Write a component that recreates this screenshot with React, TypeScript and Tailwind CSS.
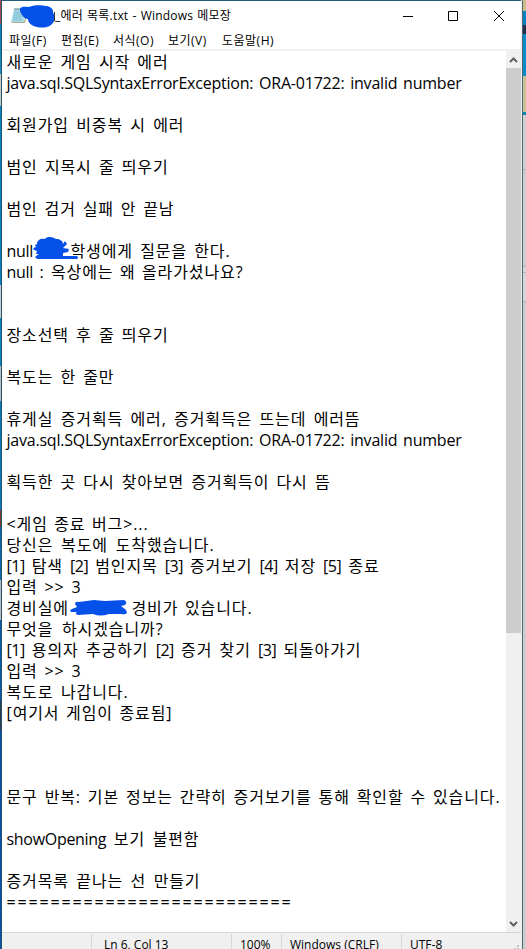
interface Line {
  text?: string;
  size?: string;
}

const hangul = "text-[16px] tracking-[0.9px]";
const latin = "text-[16px] tracking-[-0.22px]";

const lines: Line[] = [
  { text: "새로운 게임 시작 에러", size: "w-[162px]" },
  { text: "java.sql.SQLSyntaxErrorException: ORA-01722: invalid number", size: "w-[455px]" },
  {},
  { text: "회원가입 비중복 시 에러", size: "w-[178px]" },
  {},
  { text: "범인 지목시 줄 띄우기", size: "w-[162px]" },
  {},
  { text: "범인 검거 실패 안 끝남", size: "w-[168px]" },
  {},
  { text: "null", size: "w-[224px]" },
  { text: "null : 옥상에는 왜 올라가셨나요?", size: "w-[237px]" },
  {},
  {},
  { text: "장소선택 후 줄 띄우기", size: "w-[162px]" },
  {},
  { text: "복도는 한 줄만", size: "w-[108px]" },
  {},
  { text: "휴게실 증거획득 에러, 증거획득은 뜨는데 에러뜸", size: "w-[354px]" },
  { text: "java.sql.SQLSyntaxErrorException: ORA-01722: invalid number", size: "w-[455px]" },
  {},
  { text: "획득한 곳 다시 찾아보면 증거획득이 다시 뜸", size: "w-[324px]" },
  {},
  { text: "<게임 종료 버그>...", size: "w-[142px]" },
  { text: "당신은 복도에 도착했습니다.", size: "w-[208px]" },
  { text: "[1] 탐색 [2] 범인지목 [3] 증거보기 [4] 저장 [5] 종료", size: "w-[373px]" },
  { text: "입력 >> 3", size: "w-[75px]" },
  { text: "경비실에", size: "w-[246px]" },
  { text: "무엇을 하시겠습니까?", size: "w-[157px]" },
  { text: "[1] 용의자 추궁하기 [2] 증거 찾기 [3] 되돌아가기", size: "w-[355px]" },
  { text: "입력 >> 3", size: "w-[75px]" },
  { text: "복도로 나갑니다.", size: "w-[122px]" },
  { text: "[여기서 게임이 종료됨]", size: "w-[166px]" },
  {},
  {},
  {},
  { text: "문구 반복: 기본 정보는 간략히 증거보기를 통해 확인할 수 있습니다.", size: "w-[494px]" },
  {},
  { text: "showOpening 보기 불편함", size: "w-[193px]" },
  {},
  { text: "증거목록 끝나는 선 만들기", size: "w-[194px]" },
  { text: "==========================", size: "w-[287px]" },
];

const menus = [
  { label: "파일(F)", size: "w-[52px]" },
  { label: "편집(E)", size: "w-[52px]" },
  { label: "서식(O)", size: "w-[55px]" },
  { label: "보기(V)", size: "w-[54px]" },
  { label: "도움말(H)", size: "w-[66px]" },
];

const NotepadIcon = () => (
  <svg width="16" height="18" viewBox="0 0 16 18">
    <path d="M3 2h12l-2 13H0z" fill="#a9dbe8" />
    <path d="M0 15h13l2-8 1 1-2 8H1z" fill="#b7a98b" />
    <path d="M3 5h9M3 7h9M2.5 9h9M2 11h9M2 13h9" stroke="#6fb3c9" strokeWidth=".7" />
    <path d="M4 1v2M6 1v2M8 1v2M10 1v2M12 1v2M14 1v2" stroke="#617b83" />
  </svg>
);

const TitleScribble = () => (
  <svg className="absolute left-[17px] top-[4px]" width="37" height="24" viewBox="0 0 37 24">
    <path
      d="M1 4C2 1 7 2 10 2C14 0 22 0 27 1C32 1 35 5 34 8C37 11 36 17 32 20C28 23 22 23 18 22C13 21 9 18 9 14C5 14 2 9 1 6Z"
      fill="#0450e8"
    />
    <path d="M35.5 7v9" stroke="#333" />
  </svg>
);

const StudentScribble = () => (
  <svg className="absolute left-[25px] -top-[5px]" width="48" height="25" viewBox="0 0 48 25">
    <path
      d="M5 8C5 4 9 2 13 3C15 0 21 1 24 3C28 3 31 5 31 8L33 5L35 8L31 12L37 13L36 16L31 17L31 20L45 20Q47 22 45 23H6Q2 22 4 20L7 18H4L5 15L2 14Q0 12 4 11L3 9Z"
      fill="#0450e8"
    />
  </svg>
);

const GuardScribble = () => (
  <svg className="absolute left-[63.5px] top-[1px]" width="58" height="18" viewBox="0 0 58 18">
    <path
      d="M5 5Q5 2 9 3L24 1L35 2L54 1Q58 3 55 6L51 7L56 11L57 14Q55 16 51 15L39 15Q30 18 23 15L8 16Q4 15 7 13L1 13Q-1 11 2 10L7 8Z"
      fill="#0450e8"
    />
  </svg>
);

const MixedText = ({ text }: { text: string }) => (
  <>
    {text.split(/(\[\d\]|showOpening|null)/).map((part, index) => {
      if (/^\[\d\]$/.test(part)) {
        return (
          <span key={index} className="tracking-[-0.5px]">
            {part}
          </span>
        );
      }
      if (part === "showOpening" || part === "null") {
        return (
          <span key={index} className="tracking-[-0.3px]">
            {part}
          </span>
        );
      }
      return part;
    })}
  </>
);

const TextLine = ({ text = "", size = "" }: Line) => {
  if (text === "null") {
    return (
      <div className={`relative h-[21px] flex justify-between ${hangul} ${size}`}>
        <span className="tracking-[-0.3px]">null</span>
        <span className="w-[160px] [text-align-last:justify]">학생에게 질문을 한다.</span>
        <StudentScribble />
      </div>
    );
  }
  if (text === "경비실에") {
    return (
      <div className={`relative h-[21px] flex justify-between ${hangul} ${size}`}>
        <span>경비실에</span>
        <span className="w-[121px] [text-align-last:justify]">경비가 있습니다.</span>
        <GuardScribble />
      </div>
    );
  }
  if (text.startsWith("java")) {
    return <div className={`h-[21px] [text-align-last:justify] ${latin} ${size}`}>{text}</div>;
  }
  if (text.startsWith("=")) {
    return <div className={`h-[21px] text-[16px] tracking-[1.85px] ${size}`}>{text}</div>;
  }
  return (
    <div className={`h-[21px] [text-align-last:justify] ${hangul} ${size}`}>
      <MixedText text={text} />
    </div>
  );
};

const App = () => {
  return (
    <div className="w-[526px] h-[949px] overflow-hidden flex bg-white text-black whitespace-nowrap font-[370] font-['Open_Sans','Noto_Sans_CJK_KR',sans-serif]">
      <div className="w-px shrink-0 flex flex-col">
        <div className="h-[24px] bg-[#9d4a50]" />
        <div className="h-[26px] bg-[#0c83bd]" />
        <div className="h-[24px] bg-[#1689bd]" />
        <div className="h-[32px] bg-[#c8c8c8]" />
        <div className="h-[179px] bg-[#0783c2]" />
        <div className="h-[33px] bg-[#c9cdd1]" />
        <div className="h-[48px] bg-[#0784c3]" />
        <div className="h-[35px] bg-[#b9bdc1]" />
        <div className="h-[109px] bg-[#0879b9]" />
        <div className="h-[17px] bg-[#793c2b]" />
        <div className="h-[53px] bg-[#0868ad]" />
        <div className="h-[40px] bg-[#b9bdc1]" />
        <div className="h-[80px] bg-[#075bad]" />
        <div className="h-[30px] bg-[#283a4d]" />
        <div className="flex-1 bg-[#054fae]" />
      </div>
      <div className="w-px shrink-0 bg-[#27536a]" />

      <div className="w-[519px] shrink-0 flex flex-col">
        <div className="h-px shrink-0 bg-[#215c79]" />
        <div className="relative h-[29px] shrink-0 flex items-center justify-between">
          <div className="flex items-center pl-[9px]">
            <NotepadIcon />
            <div className="ml-[28px] w-[176px] text-[12px] leading-[16px] tracking-[0.2px] [text-align-last:justify]">
              _에러 목록.txt - Windows 메모장
            </div>
          </div>
          <TitleScribble />
          <svg width="104" height="12" viewBox="0 0 104 12" className="mr-[16px]" fill="none" stroke="#000">
            <path d="M2 6.5h10M47.5 1.5h9v9h-9zM93 1l10 10M103 1L93 11" />
          </svg>
        </div>
        <div className="h-[19px] shrink-0 flex pl-[7px] text-[12px] leading-[21px] tracking-[0.5px]">
          {menus.map((menu) => (
            <div key={menu.label} className={menu.size}>
              {menu.label}
            </div>
          ))}
        </div>
        <div className="h-[2px] shrink-0 bg-[#f0f0f0]" />

        <div className="h-[881px] shrink-0 flex">
          <div className="w-[504px] pt-px pl-[4.5px] leading-[21px]">
            {lines.map((line, index) => (
              <TextLine key={index} {...line} />
            ))}
          </div>
          <div className="w-[15px] flex flex-col bg-[#f0f0f0]">
            <svg width="15" height="17" viewBox="0 0 15 17" fill="none" stroke="#606060" strokeWidth="2">
              <path d="M4 11l3.5-3.5L11 11" />
            </svg>
            <div className="h-[565px] bg-[#cdcdcd]" />
            <div className="flex-1" />
            <svg width="15" height="17" viewBox="0 0 15 17" fill="none" stroke="#606060" strokeWidth="2">
              <path d="M4 7l3.5 3.5L11 7" />
            </svg>
          </div>
        </div>

        <div className="h-[17px] shrink-0 flex overflow-hidden border-t border-[#d7d7d7] bg-[#f0f0f0] text-[12px] leading-[22px]">
          <div className="w-[89px]" />
          <div className="w-[140px] h-[16px] mt-px border-l border-[#d7d7d7] pl-[12px]">Ln 6, Col 13</div>
          <div className="w-[50px] h-[16px] mt-px border-l border-[#d7d7d7] pl-[8px]">100%</div>
          <div className="w-[120px] h-[16px] mt-px border-l border-[#d7d7d7] pl-[8px]">Windows (CRLF)</div>
          <div className="flex-1 h-[16px] mt-px border-l border-[#d7d7d7] pl-[8px]">UTF-8</div>
          <svg width="8" height="16" viewBox="0 0 8 16" fill="#bfbfbf">
            <path d="M4 12h2v2H4zM1 15h2v1H1zM4 15h2v1H4z" />
          </svg>
        </div>
      </div>

      <div className="w-px shrink-0 bg-[#f0f0f0]" />
      <div className="w-px shrink-0 bg-[#4d6873]" />
      <div className="flex-1 flex flex-col">
        <div className="h-[11px] bg-[#c9bd8c]" />
        <div className="h-[14px] bg-[#0783c2]" />
        <div className="h-[9px] bg-[#232c48]" />
        <div className="h-[42px] bg-[#0b8bc8]" />
        <div className="h-[36px] bg-[#cbc08e]" />
        <div className="h-[3px] bg-[#0783b5]" />
        <div className="h-[54px] bg-[#cfcfcf]" />
        <div className="h-px bg-[#b2b2b2]" />
        <div className="h-[96px] bg-[#cfcfcf]" />
        <div className="h-px bg-[#b2b2b2]" />
        <div className="h-[5px] bg-[#d6d6d6]" />
        <div className="h-px bg-[#b2b2b2]" />
        <div className="h-[28px] bg-[#d6d6d6]" />
        <div className="h-px bg-[#b2b2b2]" />
        <div className="flex-1 bg-[#cdcdcd]" />
      </div>
    </div>
  );
};

export default App;
